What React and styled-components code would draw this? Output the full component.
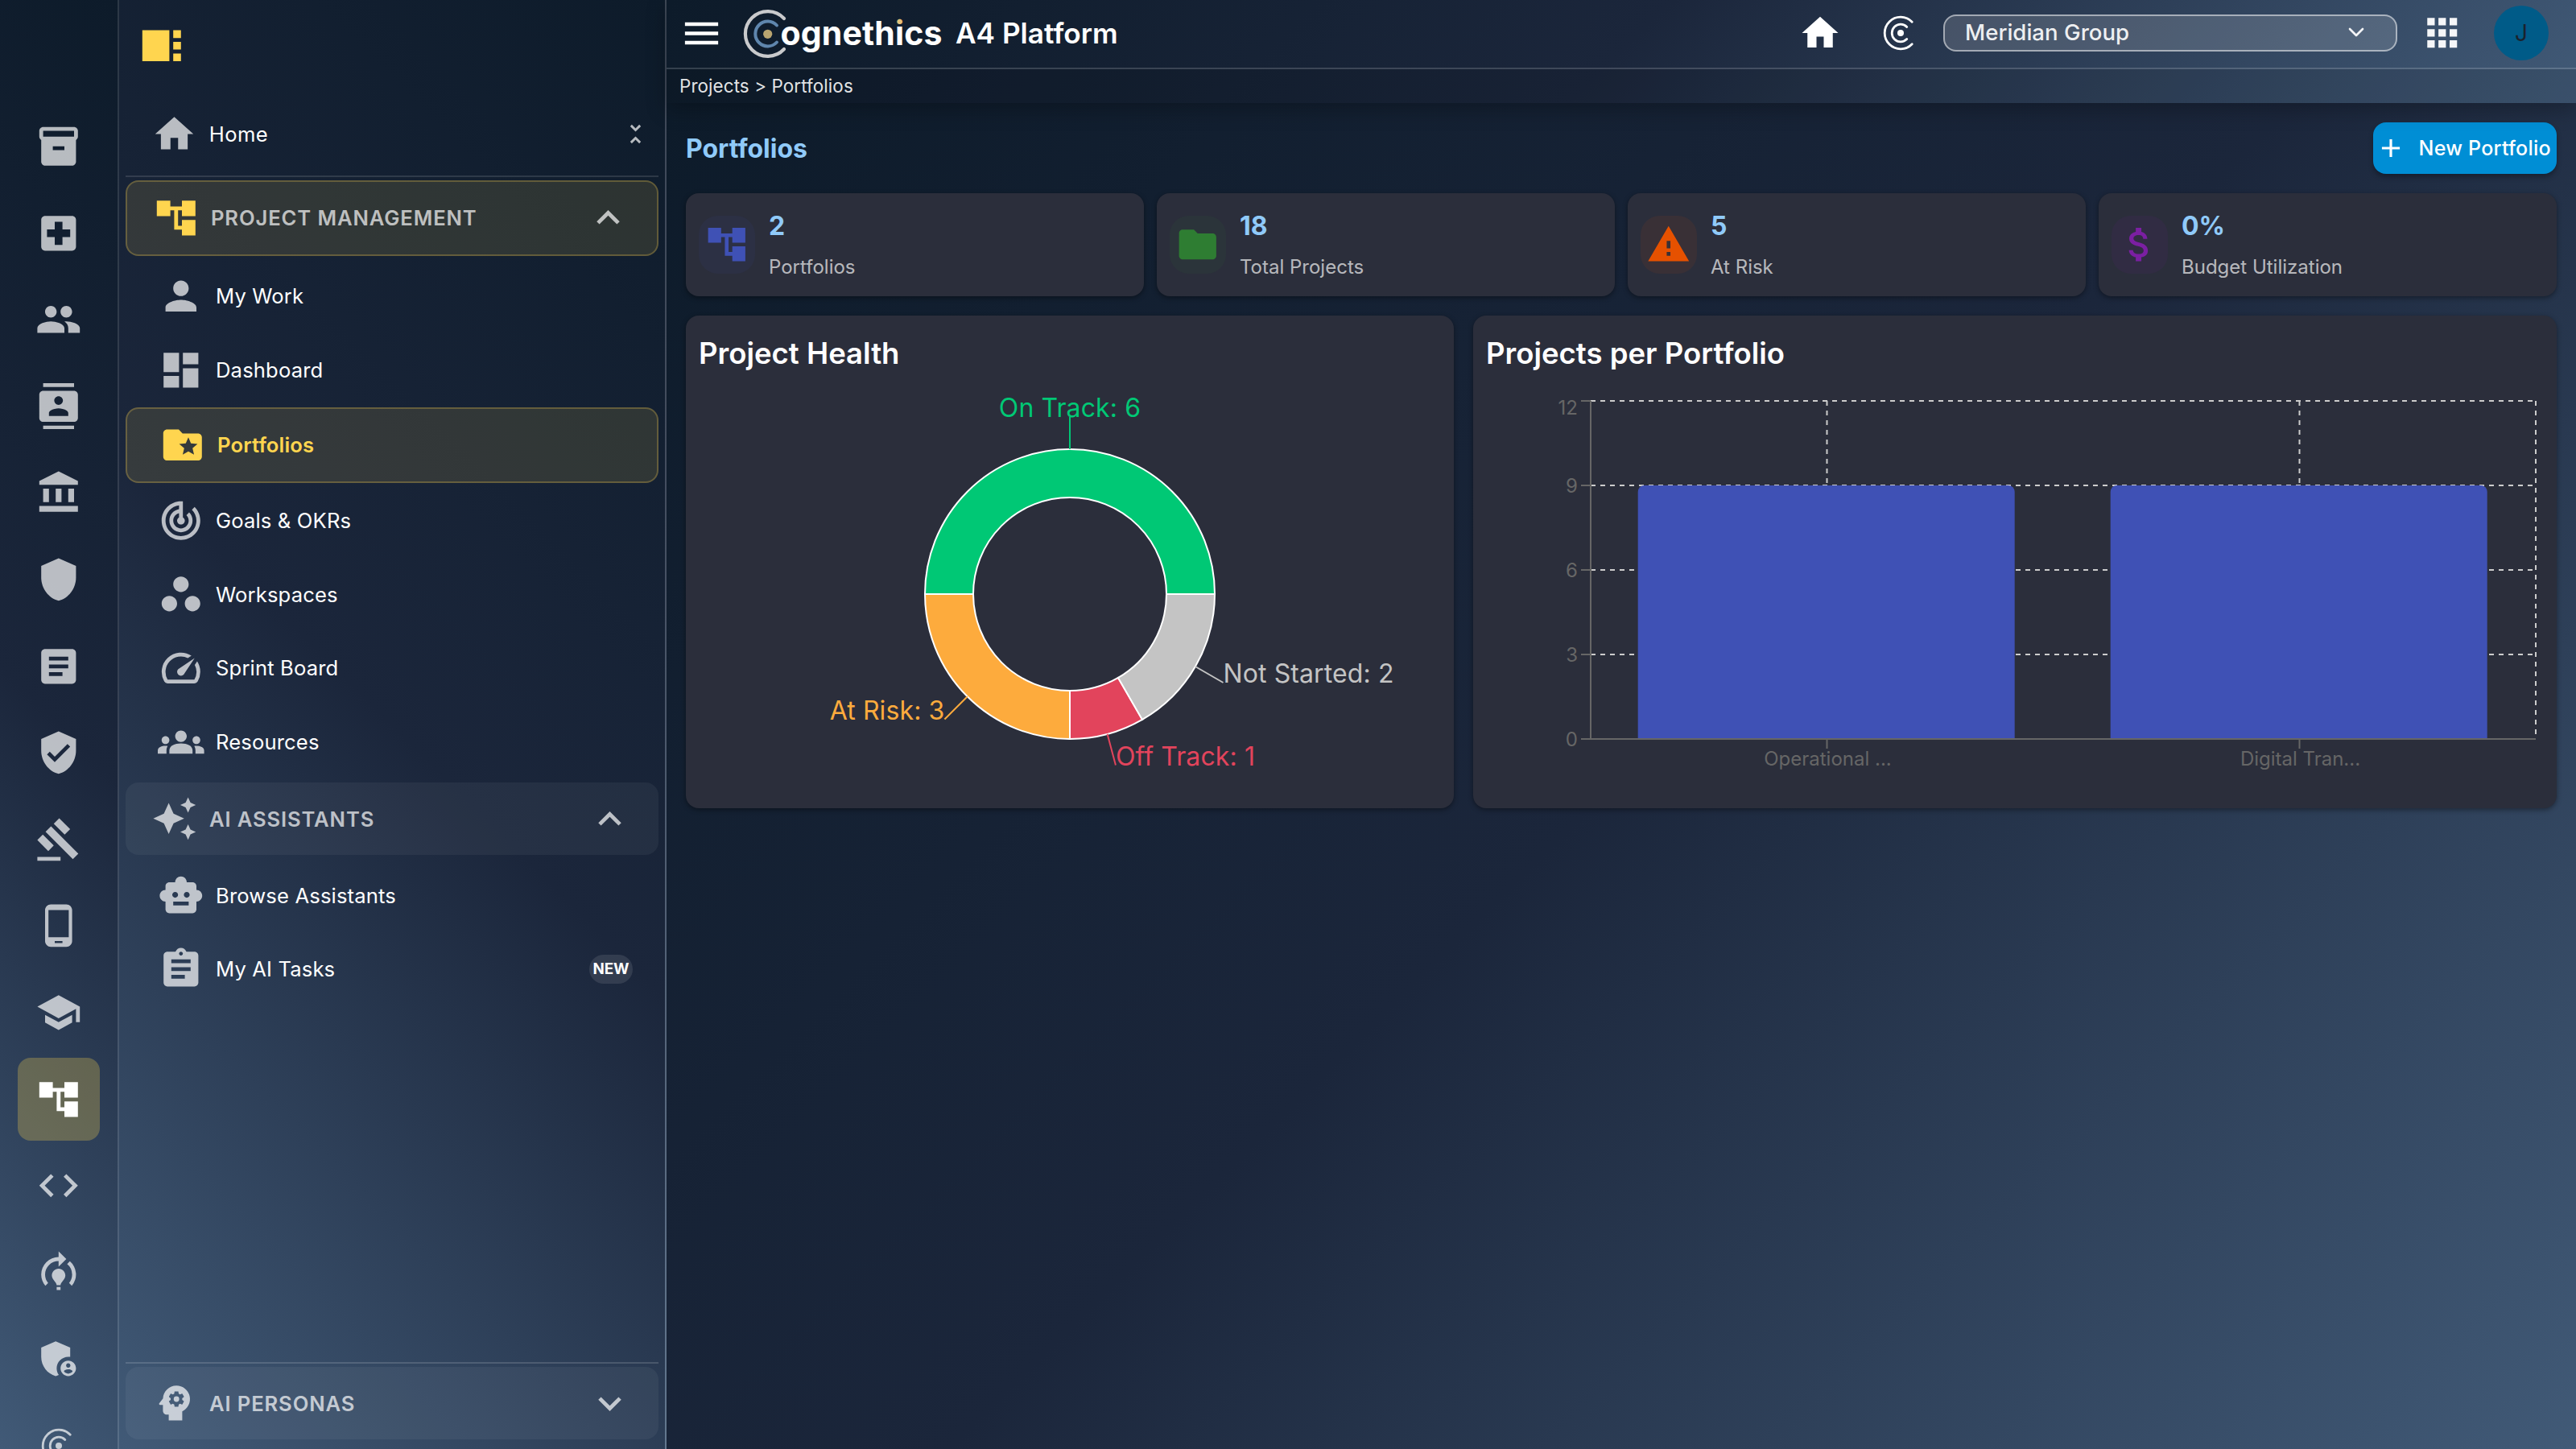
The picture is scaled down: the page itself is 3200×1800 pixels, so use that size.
import styled, { createGlobalStyle } from "styled-components"
import { ChevronDown } from "lucide-react"
import {
    MdAccountBalance,
    MdAccountTree,
    MdAdd,
    MdAdminPanelSettings,
    MdApps,
    MdArticle,
    MdAssignment,
    MdAttachMoney,
    MdAutoAwesome,
    MdCode,
    MdContacts,
    MdDashboard,
    MdExpandLess,
    MdExpandMore,
    MdFolder,
    MdFolderSpecial,
    MdGavel,
    MdGroups,
    MdHome,
    MdInventory2,
    MdLocalHospital,
    MdMenu,
    MdModelTraining,
    MdPeople,
    MdPerson,
    MdPhoneAndroid,
    MdPsychology,
    MdSchool,
    MdShield,
    MdSmartToy,
    MdSpeed,
    MdTrackChanges,
    MdUnfoldLess,
    MdVerifiedUser,
    MdViewSidebar,
    MdWarning,
    MdWorkspaces
} from "react-icons/md"

const GlobalStyle = createGlobalStyle`
    * {
        box-sizing: border-box;
    }

    body {
        margin: 0;
        overflow: hidden;
        background: #0d1b2a;
        color: white;
        font-family: Inter, "Noto Sans", sans-serif;
        font-size: 25.6px;
    }

    svg {
        display: block;
        flex-shrink: 0;
    }
`

const PageStyled = styled.div`
    display: flex;
    width: 3200px;
    height: 1800px;
    overflow: hidden;
`

/* ---------- Icon rail ---------- */

const RailStyled = styled.nav`
    display: flex;
    flex-direction: column;
    align-items: center;
    gap: 4px;
    width: 148px;
    flex-shrink: 0;
    padding-top: 130px;
    overflow: hidden;
    border-right: 2px solid rgba(255, 255, 255, 0.12);
    background: linear-gradient(225deg, #0d1b2a 0%, #1b263b 50%, #415a77 100%);
`

const RailButton = styled.div`
    display: flex;
    align-items: center;
    justify-content: center;
    width: 102px;
    height: 103.6px;
    flex-shrink: 0;
    border-radius: 16px;
    font-size: 57.6px;
    color: ${({ $active }) => ($active ? "white" : "rgba(255, 255, 255, 0.7)")};
    background: ${({ $active }) => ($active ? "rgba(255, 213, 79, 0.27)" : "transparent")};
`

/* ---------- Sidebar ---------- */

const SidebarStyled = styled.aside`
    display: flex;
    flex-direction: column;
    width: 680px;
    flex-shrink: 0;
    padding: 0 8px 12px;
    border-right: 2px solid rgba(255, 255, 255, 0.18);
    background: linear-gradient(225deg, #0d1b2a 0%, #1b263b 50%, #415a77 100%);
`

const SidebarTop = styled.div`
    height: 114px;
    padding: 27.7px 0 0 16px;
    color: #ffd54f;
    font-size: 57.6px;
`

const HomeRow = styled.div`
    display: flex;
    align-items: center;
    gap: 14.8px;
    height: 106px;
    padding: 2px 11px 2px 32px;
    border-bottom: 2px solid rgba(255, 255, 255, 0.12);
    letter-spacing: 0.4px;
    color: white;

    svg {
        color: rgba(255, 255, 255, 0.7);
    }

    svg:last-child {
        margin-left: auto;
    }
`

const SectionHeader = styled.div`
    display: flex;
    align-items: center;
    gap: 14.4px;
    height: ${({ $active }) => ($active ? "93.6px" : "90px")};
    margin-top: ${({ $offset }) => $offset || "4px"};
    padding: 0 32px;
    border: ${({ $active }) => ($active ? "2px solid rgba(255, 213, 79, 0.25)" : "none")};
    border-radius: 16px;
    background: ${({ $active }) => ($active ? "rgba(255, 213, 79, 0.12)" : "rgba(255, 255, 255, 0.05)")};
    color: rgba(255, 255, 255, 0.7);
    font-weight: 600;
    letter-spacing: 0.88px;

    svg:first-child {
        color: ${({ $active }) => ($active ? "#ffd54f" : "inherit")};
    }

    svg:last-child {
        margin-left: auto;
    }
`

const SubList = styled.div`
    display: flex;
    flex-direction: column;
    gap: 2px;
    margin-top: 5.4px;
`

const SubItem = styled.div`
    display: flex;
    align-items: center;
    gap: 14.4px;
    height: ${({ $active }) => ($active ? "93.6px" : "89.6px")};
    padding: 0 32px 0 40px;
    border: ${({ $active }) => ($active ? "2px solid rgba(255, 213, 79, 0.25)" : "none")};
    border-radius: 16px;
    background: ${({ $active }) => ($active ? "rgba(255, 213, 79, 0.12)" : "transparent")};
    color: ${({ $active }) => ($active ? "#ffd54f" : "white")};
    font-weight: ${({ $active }) => ($active ? 600 : 400)};
    letter-spacing: 0.15px;

    svg {
        color: ${({ $active }) => ($active ? "#ffd54f" : "rgba(255, 255, 255, 0.7)")};
    }
`

const NewBadge = styled.span`
    display: flex;
    align-items: center;
    justify-content: center;
    width: 54px;
    height: 36px;
    margin-left: auto;
    border-radius: 18px;
    background: rgba(255, 255, 255, 0.1);
    color: white;
    font-size: 18.8px;
    font-weight: 700;
    letter-spacing: 0;
`

const SidebarBottom = styled.div`
    margin-top: auto;
    border-top: 2px solid rgba(255, 255, 255, 0.15);
`

/* ---------- Header ---------- */

const ContentStyled = styled.div`
    display: flex;
    flex-direction: column;
    flex: 1;
    min-width: 0;
`

const HeaderStyled = styled.header`
    position: relative;
    height: 128px;
    flex-shrink: 0;
    background: linear-gradient(135deg, #0d1b2a 0%, #1b263b 50%, #415a77 100%);
    box-shadow: 0 8px 24px rgba(0, 0, 0, 0.25);
`

const AppBar = styled.div`
    display: flex;
    align-items: center;
    height: 86px;
    padding: 0 34px 2px 16px;
    border-bottom: 2px solid rgba(255, 255, 255, 0.16);
`

const MenuButton = styled.div`
    margin-right: 21px;
`

const PlatformName = styled.h1`
    margin: 0 0 0 15px;
    font-size: 35.2px;
    font-weight: 600;
    white-space: nowrap;
`

const AppBarActions = styled.div`
    display: flex;
    align-items: center;
    margin-left: auto;
`

const HomeButton = styled.div`
    margin-right: 49px;
`

const OrgSelect = styled.div`
    display: flex;
    align-items: center;
    justify-content: space-between;
    width: 564px;
    height: 46px;
    margin: 0 28px 0 28.5px;
    padding: 0 33px 2px 25.5px;
    border: 2px solid rgba(255, 255, 255, 0.5);
    border-radius: 16px;
    background: rgba(255, 255, 255, 0.15);
    color: rgba(255, 255, 255, 0.93);
    font-size: 27.6px;
    font-weight: 500;
`

const Avatar = styled.div`
    display: flex;
    align-items: center;
    justify-content: center;
    width: 68px;
    height: 68px;
    margin-left: 37px;
    border-radius: 50%;
    background: #005b88;
    color: #1b222d;
    font-size: 28px;
`

const Breadcrumb = styled.div`
    display: flex;
    align-items: center;
    height: 42px;
    padding: 0 16px 2px;
    background: rgba(0, 0, 0, 0.1);
    color: rgba(255, 255, 255, 0.9);
    font-size: 22.4px;
    letter-spacing: 0.1px;
`

/* ---------- Main ---------- */

const MainStyled = styled.main`
    display: flex;
    flex-direction: column;
    gap: 24px;
    flex: 1;
    padding: 24px;
    background: linear-gradient(135deg, #0d1b2a 0%, #1b263b 50%, #415a77 100%);
`

const TitleRow = styled.div`
    display: flex;
    align-items: center;
    justify-content: space-between;
    height: 64px;

    h2 {
        margin: 0;
        color: #90caf9;
        font-size: 32px;
        font-weight: 700;
    }
`

const NewButton = styled.button`
    display: flex;
    align-items: center;
    gap: 15.5px;
    width: 228px;
    height: 64px;
    padding: 0 0 0 3px;
    border: none;
    border-radius: 16px;
    background: #008ed5;
    box-shadow: 0 4px 6px rgba(0, 0, 0, 0.3);
    color: white;
    font-family: inherit;
    font-size: 25px;
    font-weight: 500;
    letter-spacing: 0.25px;
    white-space: nowrap;
`

const StatGrid = styled.div`
    display: grid;
    grid-template-columns: repeat(4, 1fr);
    gap: 16px;
`

const Card = styled.section`
    border-radius: 16px;
    background: #2b2e3b;
    box-shadow: 0 2px 6px rgba(0, 0, 0, 0.4);
`

const StatCard = styled(Card)`
    display: flex;
    align-items: center;
    gap: 17px;
    height: 128px;
    padding: 0 16px;
`

const StatIcon = styled.div`
    display: flex;
    align-items: center;
    justify-content: center;
    width: 70px;
    height: 72px;
    border-radius: 24px;
    background: ${({ $color }) => $color}14;
    color: ${({ $color }) => $color};
    font-size: 55.5px;
`

const StatText = styled.div`
    display: flex;
    flex-direction: column;
    gap: 13px;
    padding-top: 5px;

    strong {
        color: #90caf9;
        font-size: 32px;
        font-weight: 700;
        line-height: 38px;
    }

    span {
        color: rgba(255, 255, 255, 0.68);
        font-size: 24px;
        line-height: 38px;
    }
`

const ChartGrid = styled.div`
    display: grid;
    grid-template-columns: 954px 1346px;
    gap: 24px;
`

const ChartCard = styled(Card)`
    height: 612px;
    padding: 24px 16px 0;

    h3 {
        margin: 0;
        height: 46px;
        font-size: 36.5px;
        font-weight: 600;
        line-height: 46px;
    }

    text {
        font-family: Inter, "Noto Sans", sans-serif;
    }
`

const railIcons = [
    MdInventory2,
    MdLocalHospital,
    MdPeople,
    MdContacts,
    MdAccountBalance,
    MdShield,
    MdArticle,
    MdVerifiedUser,
    MdGavel,
    MdPhoneAndroid,
    MdSchool,
    MdAccountTree,
    MdCode,
    MdModelTraining,
    MdAdminPanelSettings
]

const projectItems = [
    { label: "My Work", Icon: MdPerson },
    { label: "Dashboard", Icon: MdDashboard },
    { label: "Portfolios", Icon: MdFolderSpecial, active: true },
    { label: "Goals & OKRs", Icon: MdTrackChanges },
    { label: "Workspaces", Icon: MdWorkspaces },
    { label: "Sprint Board", Icon: MdSpeed },
    { label: "Resources", Icon: MdGroups }
]

const assistantItems = [
    { label: "Browse Assistants", Icon: MdSmartToy },
    { label: "My AI Tasks", Icon: MdAssignment, badge: "NEW" }
]

const stats = [
    { value: "2", label: "Portfolios", Icon: MdAccountTree, color: "#3f51b5" },
    { value: "18", label: "Total Projects", Icon: MdFolder, color: "#2e7d32" },
    { value: "5", label: "At Risk", Icon: MdWarning, color: "#e65100" },
    { value: "0%", label: "Budget Utilization", Icon: MdAttachMoney, color: "#7b1fa2" }
]

const health = [
    { name: "On Track", value: 6, color: "#00c875" },
    { name: "At Risk", value: 3, color: "#fdab3d" },
    { name: "Off Track", value: 1, color: "#e2445c" },
    { name: "Not Started", value: 2, color: "#c4c4c4" }
]

const portfolios = [
    { name: "Operational ...", projects: 9 },
    { name: "Digital Tran...", projects: 9 }
]

// Point on a circle, angle in degrees, counter clockwise from 3 o'clock
const polar = (cx, cy, r, angle) => {
    const rad = (angle * Math.PI) / 180
    return [cx + r * Math.cos(rad), cy - r * Math.sin(rad)]
}

const openArc = (cx, cy, r, angle) => {
    const [x1, y1] = polar(cx, cy, r, angle)
    const [x2, y2] = polar(cx, cy, r, -angle)
    return `M${x1} ${y1}A${r} ${r} 0 1 0 ${x2} ${y2}`
}

const CogIcon = ({ size = 48 }) => (
    <svg width={size} height={size} viewBox="0 0 48 48" fill="none" stroke="currentColor" strokeLinecap="round">
        <path d={openArc(24, 24, 19.8, 44)} strokeWidth="2.8" />
        <path d={openArc(24, 24, 10.8, 44)} strokeWidth="2.8" />
        <circle cx="24" cy="24" r="4" fill="currentColor" stroke="none" />
    </svg>
)

const Logo = () => (
    <svg width="252" height="80" viewBox="0 0 252 80">
        <defs>
            <linearGradient id="dot" gradientUnits="userSpaceOnUse" x1="0" y1="0" x2="0" y2="80">
                <stop offset="0.38" stopColor="#e5c27a" />
                <stop offset="0.38" stopColor="white" />
            </linearGradient>
        </defs>
        <g fill="none" strokeLinecap="round">
            <path d={openArc(33.7, 41, 27.8, 43)} stroke="#c9cacc" strokeWidth="4.2" />
            <path d={openArc(33.7, 41, 15.4, 43)} stroke="#5f86ad" strokeWidth="4" />
        </g>
        <circle cx="33.7" cy="41.3" r="5.6" fill="#b9a570" />
        <text x="49.5" y="54.6" fill="white" fontFamily="Inter, sans-serif" fontSize="41" fontWeight="700" textLength="201">
            ogneth<tspan fill="url(#dot)">i</tspan>cs
        </text>
    </svg>
)

const HealthChart = () => {
    const cx = 461
    const cy = 276
    const total = health.reduce((sum, item) => sum + item.value, 0)
    let start = 0
    const slices = health.map((item) => {
        const end = start + (item.value / total) * 360
        const slice = { ...item, start, end, mid: (start + end) / 2 }
        start = end
        return slice
    })

    return (
        <svg width="922" height="520" viewBox="0 0 922 520">
            {slices.map(({ name, color, start, end }) => {
                const [x1, y1] = polar(cx, cy, 180, start)
                const [x2, y2] = polar(cx, cy, 180, end)
                const [x3, y3] = polar(cx, cy, 120, end)
                const [x4, y4] = polar(cx, cy, 120, start)
                return (
                    <path
                        key={name}
                        d={`M${x1} ${y1}A180 180 0 0 0 ${x2} ${y2}L${x3} ${y3}A120 120 0 0 1 ${x4} ${y4}Z`}
                        fill={color}
                        stroke="white"
                        strokeWidth="2"
                    />
                )
            })}
            {slices.map(({ name, value, color, mid }) => {
                const [x1, y1] = polar(cx, cy, 180, mid)
                const [x2, y2] = polar(cx, cy, 220, mid)
                const anchor = Math.abs(x2 - cx) < 1 ? "middle" : x2 > cx ? "start" : "end"
                return (
                    <g key={name}>
                        <line x1={x1} y1={y1} x2={x2} y2={y2} stroke={color} strokeWidth="2" />
                        <text x={x2} y={y2} fill={color} fontSize="32" letterSpacing="0.1" textAnchor={anchor}>
                            {name}: {value}
                        </text>
                    </g>
                )
            })}
        </svg>
    )
}

const PortfolioChart = () => {
    const left = 130
    const right = 1304
    const top = 36
    const bottom = 456
    const band = (right - left) / portfolios.length
    const yOf = (value) => bottom - (value / 12) * (bottom - top)

    return (
        <svg width="1314" height="520" viewBox="0 0 1314 520">
            <g stroke="#ccc" strokeWidth="2" strokeDasharray="6 6">
                {[3, 6, 9, 12].map((tick) => (
                    <line key={tick} x1={left} y1={yOf(tick)} x2={right} y2={yOf(tick)} />
                ))}
                {portfolios.map((item, i) => (
                    <line key={item.name} x1={left + band * (i + 0.5)} y1={top} x2={left + band * (i + 0.5)} y2={bottom} />
                ))}
                <line x1={right} y1={top} x2={right} y2={bottom} />
            </g>
            {portfolios.map((item, i) => {
                const x = left + band * i + 58.7
                const y = yOf(item.projects)
                return (
                    <path
                        key={item.name}
                        d={`M${x} ${bottom}V${y + 8}a8 8 0 0 1 8 -8h452a8 8 0 0 1 8 8V${bottom}Z`}
                        fill="#3f51b5"
                    />
                )
            })}
            <g stroke="#666" strokeWidth="2">
                <line x1={left} y1={top} x2={left} y2={bottom} />
                <line x1={left} y1={bottom} x2={right} y2={bottom} />
                {[0, 3, 6, 9, 12].map((tick) => (
                    <line key={tick} x1={left - 12} y1={yOf(tick)} x2={left} y2={yOf(tick)} />
                ))}
                {portfolios.map((item, i) => (
                    <line key={item.name} x1={left + band * (i + 0.5)} y1={bottom} x2={left + band * (i + 0.5)} y2={bottom + 12} />
                ))}
            </g>
            <g fill="#666" fontSize="24">
                {[0, 3, 6, 9, 12].map((tick) => (
                    <text key={tick} x={left - 16} y={yOf(tick) + (tick === 12 ? 16.5 : 8.8)} textAnchor="end">
                        {tick}
                    </text>
                ))}
                {portfolios.map((item, i) => (
                    <text key={item.name} x={left + band * (i + 0.5) + 1} y={bottom + 33} textAnchor="middle">
                        {item.name}
                    </text>
                ))}
            </g>
        </svg>
    )
}

const Rail = () => (
    <RailStyled>
        {railIcons.map((Icon, i) => (
            <RailButton key={i} $active={Icon === MdAccountTree}>
                <Icon />
            </RailButton>
        ))}
        <RailButton>
            <CogIcon size={48} />
        </RailButton>
    </RailStyled>
)

const SubItems = ({ items }) => (
    <SubList>
        {items.map(({ label, Icon, active, badge }) => (
            <SubItem key={label} $active={active}>
                <Icon size={57.6} />
                {label}
                {badge && <NewBadge>{badge}</NewBadge>}
            </SubItem>
        ))}
    </SubList>
)

const Sidebar = () => (
    <SidebarStyled>
        <SidebarTop>
            <MdViewSidebar />
        </SidebarTop>
        <HomeRow>
            <MdHome size={57} />
            Home
            <MdUnfoldLess size={35} />
        </HomeRow>
        <SectionHeader $active>
            <MdAccountTree size={57.6} />
            PROJECT MANAGEMENT
            <MdExpandLess size={57} />
        </SectionHeader>
        <SubItems items={projectItems} />
        <SectionHeader $offset="6px">
            <MdAutoAwesome size={57.6} />
            AI ASSISTANTS
            <MdExpandLess size={57} />
        </SectionHeader>
        <SubItems items={assistantItems} />
        <SidebarBottom>
            <SectionHeader>
                <MdPsychology size={57.6} />
                AI PERSONAS
                <MdExpandMore size={57} />
            </SectionHeader>
        </SidebarBottom>
    </SidebarStyled>
)

const Header = () => (
    <HeaderStyled>
        <AppBar>
            <MenuButton>
                <MdMenu size={55} />
            </MenuButton>
            <Logo />
            <PlatformName>A4 Platform</PlatformName>
            <AppBarActions>
                <HomeButton>
                    <MdHome size={54} />
                </HomeButton>
                <CogIcon size={48} />
                <OrgSelect>
                    Meridian Group
                    <ChevronDown size={32} />
                </OrgSelect>
                <MdApps size={55.5} color="#f5f6f8" />
                <Avatar>J</Avatar>
            </AppBarActions>
        </AppBar>
        <Breadcrumb>Projects &gt; Portfolios</Breadcrumb>
    </HeaderStyled>
)

const App = () => {
    return (
        <>
            <GlobalStyle />
            <PageStyled>
                <Rail />
                <Sidebar />
                <ContentStyled>
                    <Header />
                    <MainStyled>
                        <TitleRow>
                            <h2>Portfolios</h2>
                            <NewButton>
                                <MdAdd size={38} />
                                New Portfolio
                            </NewButton>
                        </TitleRow>
                        <StatGrid>
                            {stats.map(({ value, label, Icon, color }) => (
                                <StatCard key={label}>
                                    <StatIcon $color={color}>
                                        <Icon />
                                    </StatIcon>
                                    <StatText>
                                        <strong>{value}</strong>
                                        <span>{label}</span>
                                    </StatText>
                                </StatCard>
                            ))}
                        </StatGrid>
                        <ChartGrid>
                            <ChartCard>
                                <h3>Project Health</h3>
                                <HealthChart />
                            </ChartCard>
                            <ChartCard>
                                <h3>Projects per Portfolio</h3>
                                <PortfolioChart />
                            </ChartCard>
                        </ChartGrid>
                    </MainStyled>
                </ContentStyled>
            </PageStyled>
        </>
    )
}

export default App
